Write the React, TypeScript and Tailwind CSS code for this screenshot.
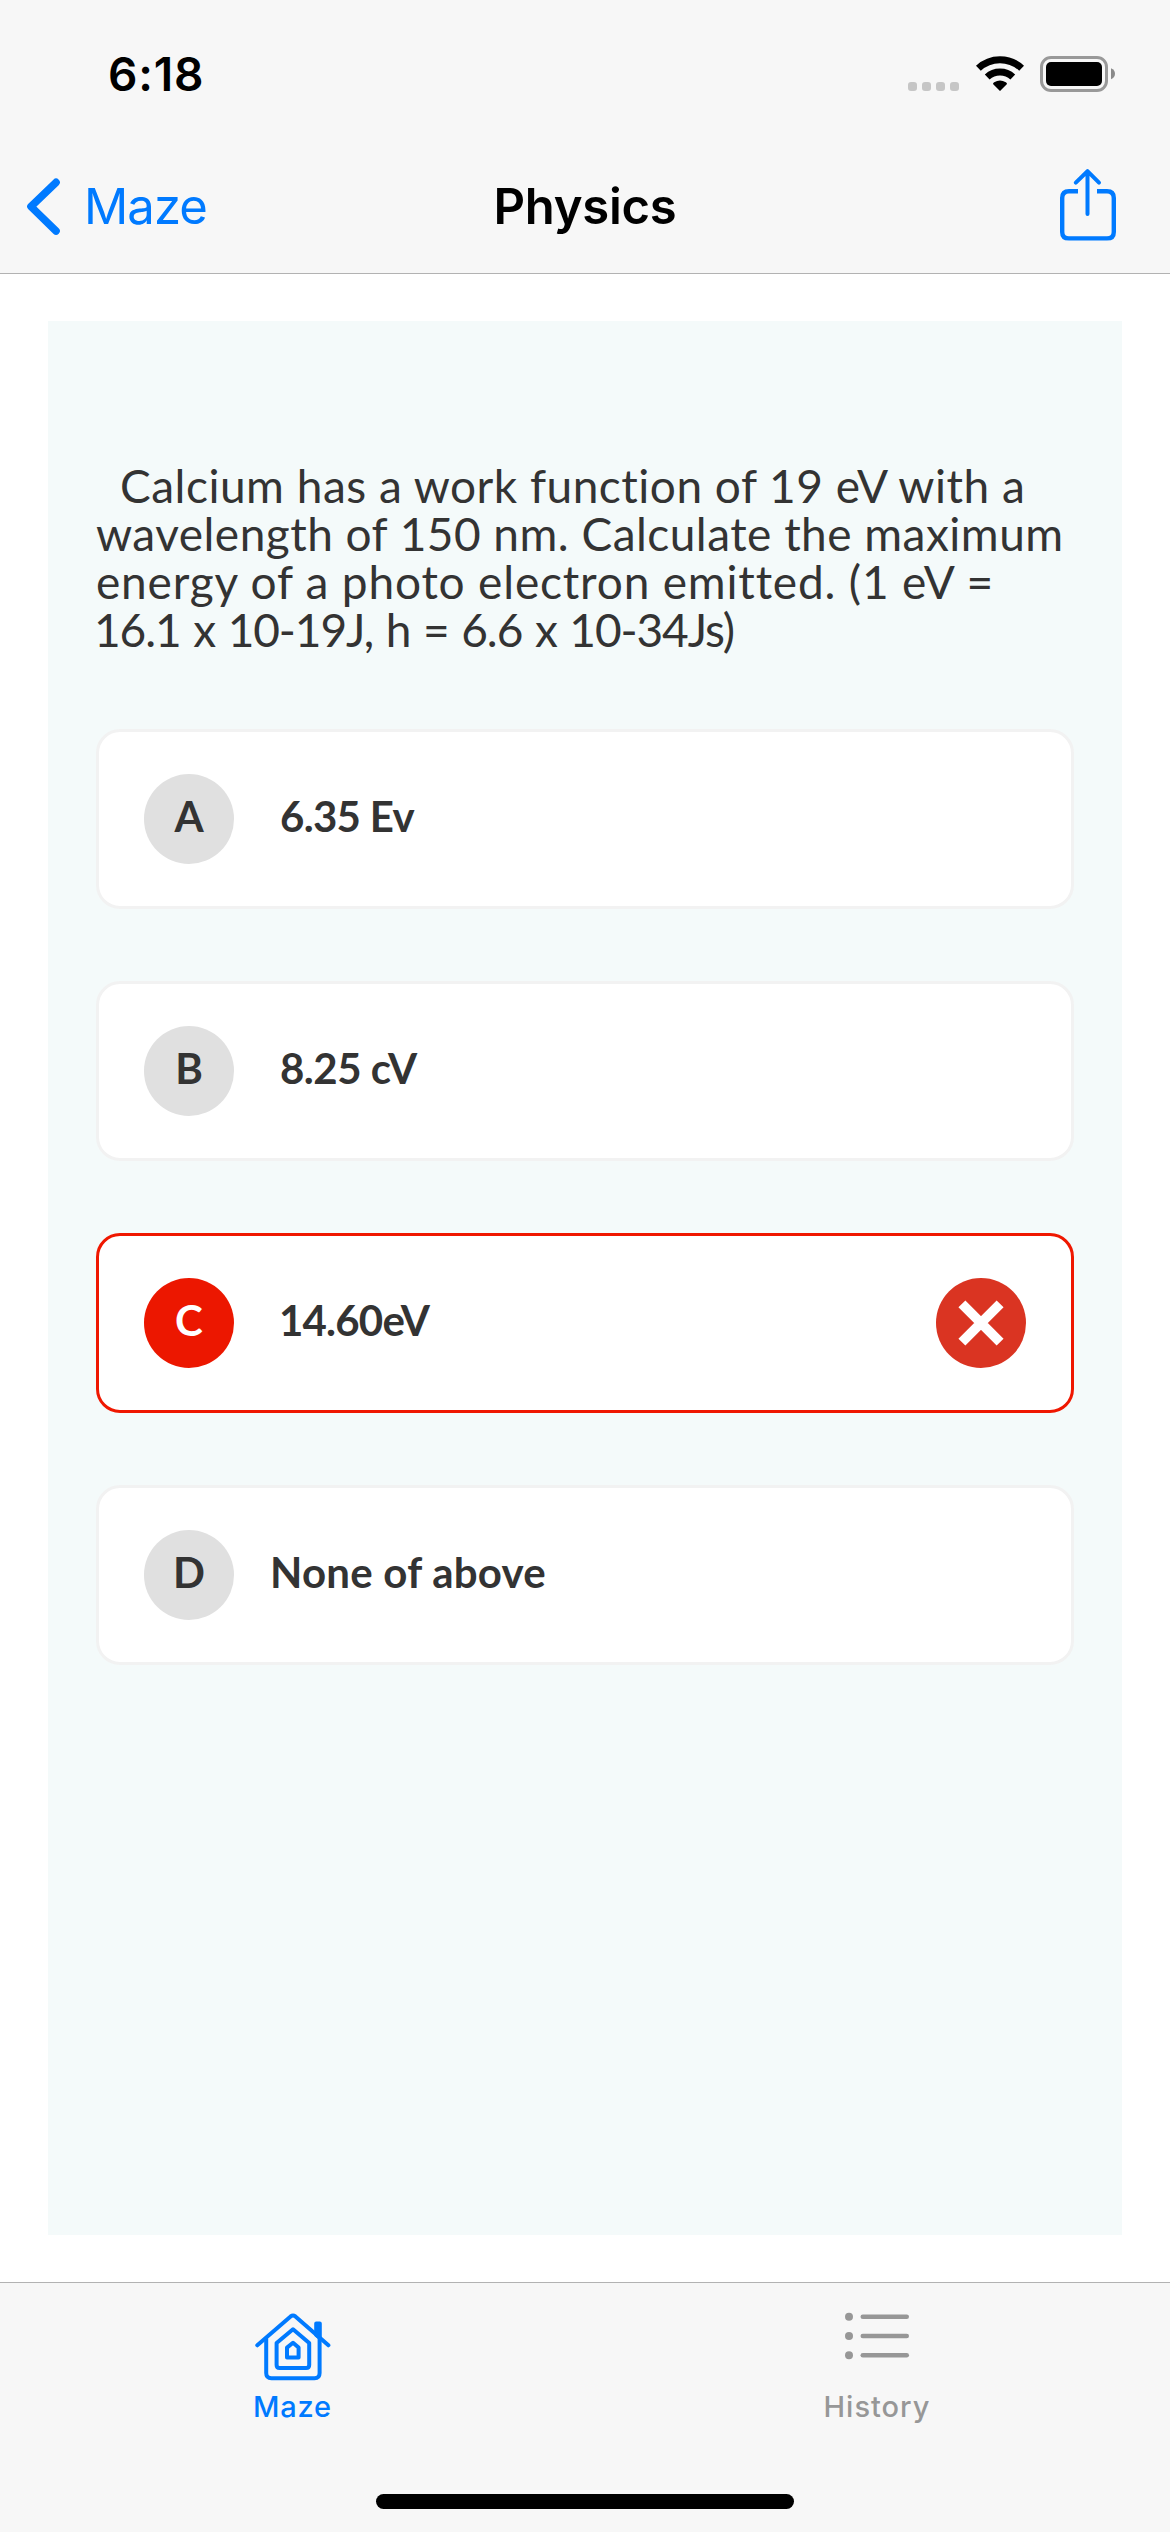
import React from "react";

type Option = { letter: string; text: string; textClass: string; wrong?: boolean };

const options: Option[] = [
  { letter: "A", text: "6.35 Ev", textClass: "ml-[46px] tracking-[-0.7px]" },
  { letter: "B", text: "8.25 cV", textClass: "ml-[46px] tracking-[-0.5px]" },
  { letter: "C", text: "14.60eV", textClass: "ml-[45px] tracking-[-0.8px]", wrong: true },
  { letter: "D", text: "None of above", textClass: "ml-[36px] tracking-[0.24px]" },
];

function StatusBar() {
  return (
    <div className="flex h-[141px] items-start justify-between pl-[108px] pr-[54px]">
      <div className="mt-[44px] text-[46px] font-semibold leading-[60px] tracking-[0.8px] text-black">6:18</div>
      <div className="mt-[54px] flex items-start">
        <div className="mt-[28px] flex gap-[5px]">
          <span className="size-[9px] rounded-[3px] bg-[#c6c6c6]" />
          <span className="size-[9px] rounded-[3px] bg-[#c6c6c6]" />
          <span className="size-[9px] rounded-[3px] bg-[#c6c6c6]" />
          <span className="size-[9px] rounded-[3px] bg-[#c6c6c6]" />
        </div>
        <svg className="ml-[16px]" width="50" height="38" viewBox="0 0 50 38">
          <g fill="none" stroke="#000" strokeWidth="7">
            <path d="M3.4 14.2 A31.5 31.5 0 0 1 46.6 14.2" />
            <path d="M12.2 23 A18.8 18.8 0 0 1 37.8 23" />
          </g>
          <path d="M25 37 L18 30 Q18 28.8 19.2 28.2 Q25 24.8 30.8 28.2 Q32 28.8 32 30 Z" fill="#000" />
        </svg>
        <svg className="ml-[15px]" width="76" height="38" viewBox="0 0 76 38">
          <rect x="1.5" y="3.5" width="65" height="33" rx="9.5" fill="none" stroke="#999" strokeWidth="3" />
          <rect x="6" y="8" width="56" height="24" rx="5" fill="#000" />
          <path d="M71 14.3 Q75 16.2 75 19.8 Q75 23.4 71 25.3 Z" fill="#8a8a8a" />
        </svg>
      </div>
    </div>
  );
}

function NavBar() {
  return (
    <div className="grid h-[132px] grid-cols-3 items-center">
      <button className="flex items-center pl-[24px] text-[#007aff]">
        <svg width="40" height="60" viewBox="0 0 40 60" fill="none" stroke="currentColor" strokeWidth="7.6" strokeLinecap="round" strokeLinejoin="round">
          <path d="M32 5.4 L7 29.6 L32 54" />
        </svg>
        <span className="ml-[20px] text-[49px] leading-[60px] tracking-[-0.95px]">Maze</span>
      </button>
      <h1 className="text-center text-[49px] font-semibold leading-[60px] tracking-[-0.27px] text-black">Physics</h1>
      <button className="flex justify-end pr-[54px] text-[#007aff]">
        <svg className="mb-[4px]" width="58" height="74" viewBox="0 0 58 74" fill="none" stroke="currentColor" strokeWidth="4.4">
          <path d="M20 23.2 H11 Q4.2 23.2 4.2 30 V63.9 Q4.2 70.4 11 70.4 H49 Q55.8 70.4 55.8 63.9 V30 Q55.8 23.2 49 23.2 H39" />
          <path d="M29.5 4 V46 M17.8 14.6 L29.5 3.2 L41 14.6" strokeWidth="4" strokeLinecap="round" strokeLinejoin="round" />
        </svg>
      </button>
    </div>
  );
}

function OptionCard({ option }: { option: Option }) {
  return (
    <div
      className={
        "flex h-[180px] items-center rounded-[24px] border-[3px] bg-white px-[45px] " +
        (option.wrong ? "border-[#ef1700]" : "border-[#f2f2f2]")
      }
    >
      <div
        className={
          "flex size-[90px] shrink-0 items-center justify-center rounded-full pb-[7px] text-[42px] font-bold leading-[50px] " +
          (option.wrong ? "bg-[#ec1700] text-white" : "bg-[#e0e0e0] text-[#333]")
        }
      >
        {option.letter}
      </div>
      <div className={"flex-1 pb-[7px] text-[42px] font-bold leading-[50px] " + option.textClass}>{option.text}</div>
      {option.wrong && (
        <svg width="90" height="90" viewBox="0 0 90 90">
          <circle cx="45" cy="45" r="45" fill="#da3422" />
          <path d="M25.9 25.9 L64.1 64.1 M64.1 25.9 L25.9 64.1" stroke="#fff" strokeWidth="9.8" />
        </svg>
      )}
    </div>
  );
}

function MazeIcon() {
  return (
    <svg width="76" height="70" viewBox="0 0 76 70" fill="none" stroke="currentColor" strokeWidth="4" strokeLinecap="round" strokeLinejoin="round">
      <path d="M2.3 33.3 L35.6 4.4 Q38 2.6 40.4 4.4 L73.4 33.3" />
      <path d="M11.2 27 V61 Q11.2 66.2 16.5 66.2 H59.5 Q64.6 66.2 64.6 61 V27" />
      <path d="M61.2 11.5 H64.8 V26 L61.2 23 Z" fill="currentColor" />
      <path d="M21.6 31 L38 17.2 L54.2 31 V53 Q54.2 56 51.2 56 H24.6 Q21.6 56 21.6 53 Z" />
      <path d="M32 35.6 L38 30.8 L43.6 35.6 V45.6 H32 Z" />
    </svg>
  );
}

function ListIcon() {
  return (
    <svg width="68" height="70" viewBox="0 1.9 68 70" fill="currentColor">
      <circle cx="6" cy="6.6" r="4" />
      <circle cx="6" cy="25.9" r="4" />
      <circle cx="6" cy="45.1" r="4" />
      <rect x="17.5" y="4.3" width="48.5" height="4.6" rx="2.3" />
      <rect x="17.5" y="23.6" width="48.5" height="4.6" rx="2.3" />
      <rect x="17.5" y="42.8" width="48.5" height="4.6" rx="2.3" />
    </svg>
  );
}

export default function App() {
  return (
    <div className="flex h-[2532px] w-[1170px] flex-col overflow-hidden bg-white font-[Inter,sans-serif]">
      <header className="h-[274px] border-b border-[#b2b2b2] bg-[#f7f7f7]">
        <StatusBar />
        <NavBar />
      </header>

      <main className="flex-1 px-[48px] pt-[47px] pb-[47px] font-[Lato,sans-serif] text-[#333]">
        <section className="flex h-full flex-col bg-[#f4fafa] px-[48px] pt-[141px]">
          <p className="whitespace-nowrap text-[46px] leading-[48px]">
            <span className="block pl-[24px] tracking-[0.5px]">Calcium has a work function of 19 eV with a</span>
            <span className="block tracking-[0.48px]">wavelength of 150 nm. Calculate the maximum</span>
            <span className="block tracking-[0.82px]">energy of a photo electron emitted. (1 eV =</span>
            <span className="-ml-[2px] block tracking-[-1.1px] [word-spacing:2px]">16.1 x 10-19J, h = 6.6 x 10-34Js)</span>
          </p>
          <div className="mt-[75px] flex flex-col gap-[72px]">
            {options.map((o) => (
              <OptionCard key={o.letter} option={o} />
            ))}
          </div>
        </section>
      </main>

      <footer className="flex h-[250px] flex-col border-t border-[#b2b2b2] bg-[#f7f7f7]">
        <nav className="grid grid-cols-2 text-[29px] font-[450] leading-[36px]">
          <div className="flex flex-col items-center pt-[29px] text-[#007aff]">
            <MazeIcon />
            <span className="mt-[7px] tracking-[0.8px]">Maze</span>
          </div>
          <div className="flex flex-col items-center pr-[1px] pt-[29px] text-[#979797]">
            <ListIcon />
            <span className="mt-[7px] tracking-[1px]">History</span>
          </div>
        </nav>
        <div className="mx-auto mt-[69px] h-[15px] w-[418px] rounded-full bg-black" />
      </footer>
    </div>
  );
}
